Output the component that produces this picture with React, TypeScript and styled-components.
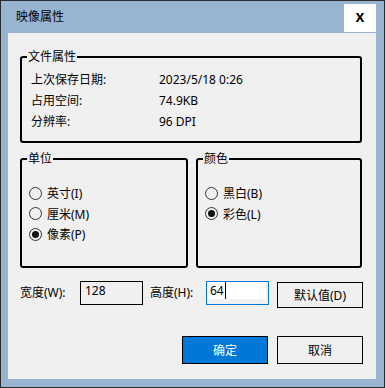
import styled, { createGlobalStyle } from 'styled-components';

const GlobalStyle = createGlobalStyle`
  html, body {
    margin: 0;
    padding: 0;
    background: #ffffff;
  }
  body {
    font-family: "Noto Sans", "Noto Sans CJK SC", sans-serif;
    font-size: 12px;
    color: #000;
  }
  * {
    box-sizing: border-box;
  }
`;

const Window = styled.div`
  width: 385px;
  height: 388px;
  border: 1px solid #2b2b2b;
  background: #99b4d1;
  display: flex;
  flex-direction: column;
`;

const TitleBar = styled.div`
  height: 32px;
  display: flex;
  justify-content: space-between;
  align-items: flex-start;
  padding: 0 8px 0 15px;
`;

const Title = styled.span`
  line-height: 32px;
  font-size: 12px;
`;

const CloseButton = styled.div`
  margin-top: 3px;
  width: 32px;
  height: 28px;
  background: #ffffff;
  display: flex;
  align-items: center;
  justify-content: center;
  padding-bottom: 3px;
  font-family: "Liberation Sans", Arial, sans-serif;
  font-weight: bold;
  font-size: 16px;
`;

const Client = styled.div`
  flex: 1;
  margin: 0 8px 8px 7px;
  background: #f0f0f0;
  padding: 16px 13px 0 12px;
  display: flex;
  flex-direction: column;
`;

const Group = styled.fieldset<{ $top: number; $bottom: number; $width: number }>`
  margin: 0;
  min-width: 0;
  width: ${p => p.$width}px;
  border: 2px solid #000;
  border-radius: 3px;
  padding: ${p => p.$top}px 8px ${p => p.$bottom}px 5px;
`;

const Legend = styled.legend`
  padding: 0 1px;
  font-size: 12px;
  line-height: 16px;
`;

const InfoGrid = styled.div`
  display: grid;
  grid-template-columns: 128px auto;
  padding-left: 4px;
  line-height: 21px;
`;

const GroupRow = styled.div`
  margin-top: 8px;
  height: 117px;
  display: flex;
  gap: 8px;
`;

const RadioRow = styled.div`
  height: 20.5px;
  display: flex;
  align-items: center;
  gap: 5px;
  padding-left: 2px;
`;

const RadioCircle = styled.span<{ $checked?: boolean }>`
  width: 13px;
  height: 13px;
  border: 1px solid #333;
  border-radius: 50%;
  display: flex;
  align-items: center;
  justify-content: center;
  &::after {
    content: '';
    width: 7px;
    height: 7px;
    border-radius: 50%;
    background: ${p => (p.$checked ? '#111' : 'transparent')};
  }
`;

const SizeRow = styled.div`
  margin-top: 13px;
  display: flex;
  align-items: flex-start;
`;

const FieldLabel = styled.span<{ $width: number; $gap?: number }>`
  width: ${p => p.$width}px;
  margin-left: ${p => p.$gap ?? 0}px;
  line-height: 24px;
  white-space: nowrap;
`;

const TextBox = styled.div<{ $focused?: boolean }>`
  width: 63px;
  height: 24px;
  border: 1px solid ${p => (p.$focused ? '#0078d7' : '#000')};
  background: #f0f0f0;
  padding: ${p => (p.$focused ? '0 2px 3px 0' : '0')};
`;

const TextInner = styled.div<{ $focused?: boolean }>`
  height: 17px;
  background: ${p => (p.$focused ? '#ffffff' : 'transparent')};
  padding-left: ${p => (p.$focused ? 3 : 4)}px;
  line-height: 17px;
  display: flex;
  align-items: center;
`;

const Caret = styled.span`
  display: inline-block;
  width: 1px;
  height: 17px;
  background: #000;
  margin-left: 1px;
`;

const Button = styled.button<{ $primary?: boolean; $gap?: number; $small?: boolean }>`
  width: 86px;
  height: ${p => (p.$small ? 26 : 28)}px;
  margin-left: ${p => p.$gap ?? 0}px;
  margin-top: ${p => (p.$small ? 1 : 0)}px;
  border: 1px solid #000;
  background: ${p => (p.$primary ? '#0078d7' : '#f0f0f0')};
  color: ${p => (p.$primary ? '#ffffff' : '#000')};
  font-family: inherit;
  font-size: 12px;
  padding: 0;
`;

const Footer = styled.div`
  margin-top: 28px;
  display: flex;
  justify-content: flex-end;
  gap: 9px;
`;

export default function App() {
  return (
    <>
      <GlobalStyle />
      <Window>
        <TitleBar>
          <Title>映像属性</Title>
          <CloseButton>x</CloseButton>
        </TitleBar>
        <Client>
          <Group $top={4} $bottom={9} $width={342}>
            <Legend>文件属性</Legend>
            <InfoGrid>
              <span>上次保存日期:</span>
              <span>2023/5/18 0:26</span>
              <span>占用空间:</span>
              <span>74.9KB</span>
              <span>分辨率:</span>
              <span>96 DPI</span>
            </InfoGrid>
          </Group>
          <GroupRow>
            <Group $top={16} $bottom={0} $width={168}>
              <Legend>单位</Legend>
              <RadioRow><RadioCircle />英寸(I)</RadioRow>
              <RadioRow><RadioCircle />厘米(M)</RadioRow>
              <RadioRow><RadioCircle $checked />像素(P)</RadioRow>
            </Group>
            <Group $top={16} $bottom={0} $width={166}>
              <Legend>颜色</Legend>
              <RadioRow><RadioCircle />黑白(B)</RadioRow>
              <RadioRow><RadioCircle $checked />彩色(L)</RadioRow>
            </Group>
          </GroupRow>
          <SizeRow>
            <FieldLabel $width={60}>宽度(W):</FieldLabel>
            <TextBox>
              <TextInner>128</TextInner>
            </TextBox>
            <FieldLabel $width={56} $gap={7}>高度(H):</FieldLabel>
            <TextBox $focused>
              <TextInner $focused>64<Caret /></TextInner>
            </TextBox>
            <Button $gap={8} $small>默认值(D)</Button>
          </SizeRow>
          <Footer>
            <Button $primary>确定</Button>
            <Button>取消</Button>
          </Footer>
        </Client>
      </Window>
    </>
  );
}
